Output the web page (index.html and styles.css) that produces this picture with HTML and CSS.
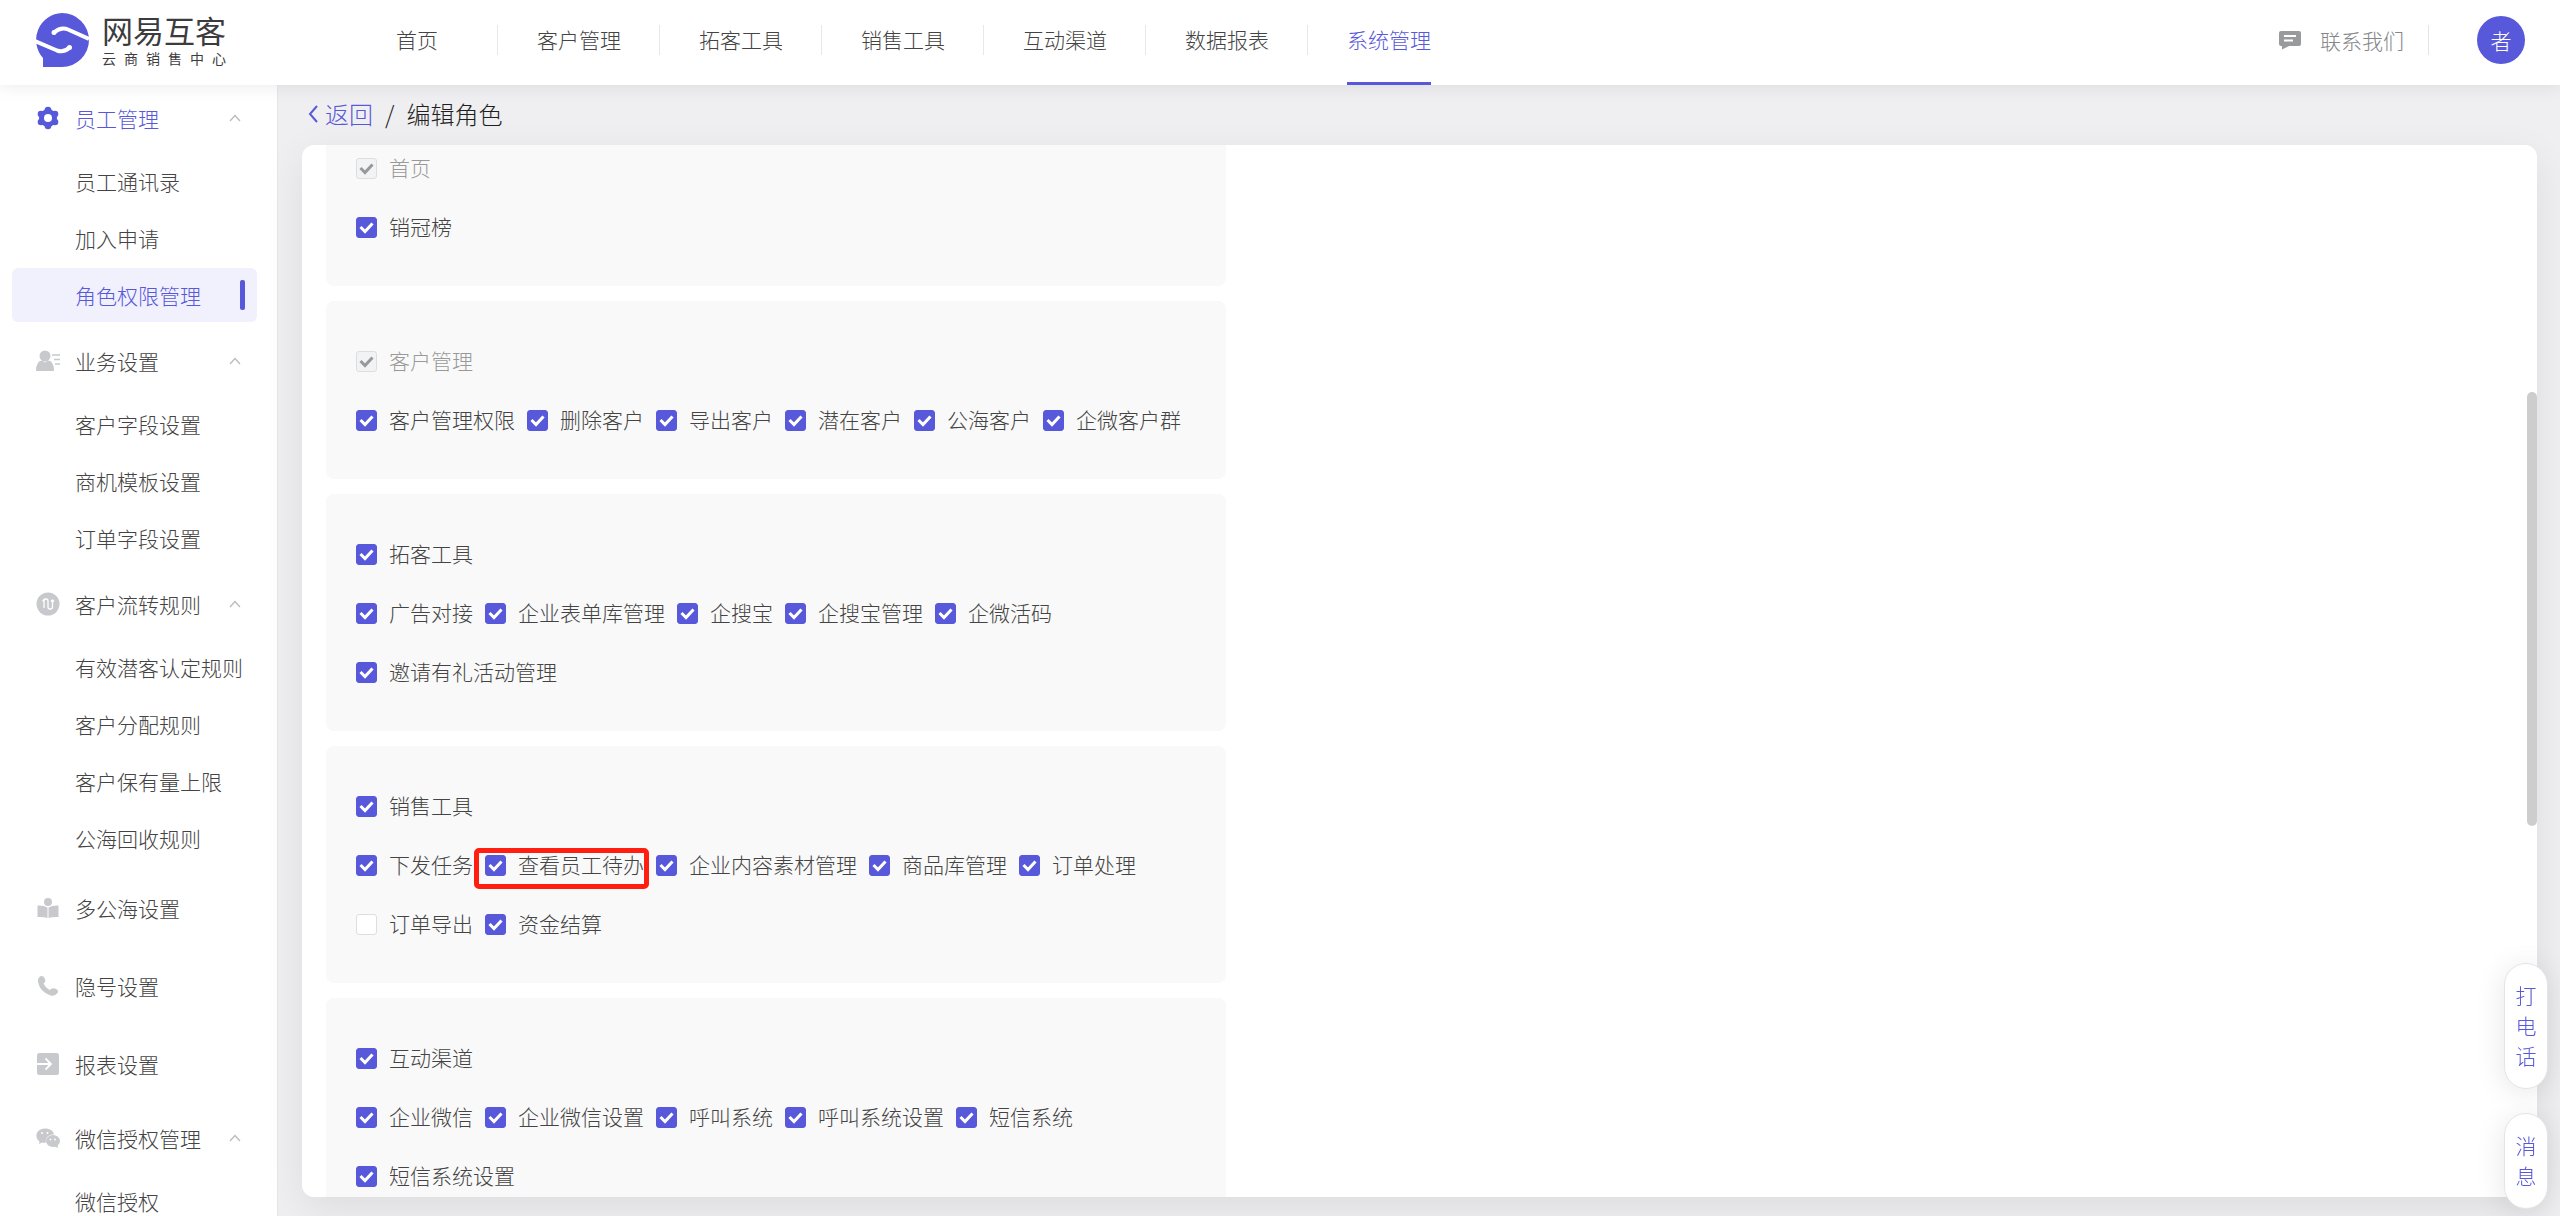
FILE: index.html
```html
<!DOCTYPE html>
<html lang="zh-CN">
<head>
<meta charset="utf-8">
<title>编辑角色</title>
<link rel="stylesheet" href="styles.css">
</head>
<body>
<div class="app">
  <header class="topbar">
    <a class="brand" href="#">
      <svg class="brand-mark" viewBox="0 0 54 54" aria-hidden="true">
        <path d="M27 0A27 27 0 0 1 54 27A27 27 0 0 1 27 54H8V45A27 27 0 0 1 27 0Z" fill="#5858da"/>
        <path d="M0 28L22 37.500Q29 40 34.500 34.500M54 26L33 16.500Q26 13.500 19 19.500" fill="none" stroke="#fff" stroke-width="4"/>
        <circle cx="19" cy="19.500" r="2.500" fill="#fff"/><circle cx="34.500" cy="34.500" r="2.500" fill="#fff"/>
      </svg>
      <span class="brand-text">
        <span class="brand-name">网易互客</span>
        <span class="brand-sub"><span>云</span><span>商</span><span>销</span><span>售</span><span>中</span><span>心</span></span>
      </span>
    </a>
    <nav class="nav">
      <a href="#">首页</a>
      <a href="#">客户管理</a>
      <a href="#">拓客工具</a>
      <a href="#">销售工具</a>
      <a href="#">互动渠道</a>
      <a href="#">数据报表</a>
      <a href="#" class="current"><span>系统管理</span></a>
    </nav>
    <a class="contact" href="#">
      <svg width="22" height="20" viewBox="0 0 22 20" aria-hidden="true"><path d="M2 1H20Q22 1 22 3V14Q22 16 20 16H10L3 19.500V16H2Q0 16 0 14V3Q0 1 2 1Z" fill="#999a9c"/><path d="M5 6H17M5 10.500H14" stroke="#fff" stroke-width="2"/></svg>
      联系我们
    </a>
    <button class="avatar" type="button">者</button>
  </header>

  <div class="body">
    <aside class="sidebar">
      <section class="group">
        <button class="head current" type="button">
          <svg class="icon" viewBox="0 0 24 26" aria-hidden="true"><g fill="#5858da"><circle cx="12" cy="13" r="9"/><circle cx="12" cy="5" r="3.300"/><circle cx="12" cy="21" r="3.300"/><circle cx="5" cy="9" r="3.300"/><circle cx="19" cy="9" r="3.300"/><circle cx="5" cy="17" r="3.300"/><circle cx="19" cy="17" r="3.300"/></g><circle cx="12" cy="13" r="4" fill="#fff"/></svg>
          <span>员工管理</span>
          <svg class="caret" viewBox="0 0 12 8" aria-hidden="true"><path d="M1 7L6 1.500L11 7"/></svg>
        </button>
        <a href="#">员工通讯录</a>
        <a href="#">加入申请</a>
        <a href="#" class="current">角色权限管理</a>
      </section>
      <section class="group">
        <button class="head" type="button">
          <svg class="icon" viewBox="0 0 24 24" aria-hidden="true"><g fill="#c8c9cc"><circle cx="9" cy="7" r="5.500"/><path d="M0 22Q0 12 6 11.500L9 13.500L12 11.500Q18 12 18 22Z"/></g><path d="M16 6H24M18 10.500H24M19 15H24" stroke="#c8c9cc" stroke-width="1.500"/></svg>
          <span>业务设置</span>
          <svg class="caret" viewBox="0 0 12 8" aria-hidden="true"><path d="M1 7L6 1.500L11 7"/></svg>
        </button>
        <a href="#">客户字段设置</a>
        <a href="#">商机模板设置</a>
        <a href="#">订单字段设置</a>
      </section>
      <section class="group">
        <button class="head" type="button">
          <svg class="icon" viewBox="0 0 24 24" aria-hidden="true"><circle cx="12" cy="12" r="11.500" fill="#c8c9cc"/><path d="M6.500 9L8 7.500V16M8 8.500Q8 7 10 7Q12 7 12 9V15Q12 17 14 17Q16.500 17 16.500 15V8M15 9.500L16.500 8L18 9.500" fill="none" stroke="#fff" stroke-width="1.300"/></svg>
          <span>客户流转规则</span>
          <svg class="caret" viewBox="0 0 12 8" aria-hidden="true"><path d="M1 7L6 1.500L11 7"/></svg>
        </button>
        <a href="#">有效潜客认定规则</a>
        <a href="#">客户分配规则</a>
        <a href="#">客户保有量上限</a>
        <a href="#">公海回收规则</a>
      </section>
      <button class="head single" type="button">
        <svg class="icon" viewBox="0 0 24 24" aria-hidden="true"><g fill="#c8c9cc"><circle cx="12" cy="6" r="4"/><path d="M1.500 9.500Q7 9 11.500 11.500V22Q7 20.500 1.500 21ZM22.500 9.500Q17 9 12.500 11.500V22Q17 20.500 22.500 21Z"/></g></svg>
        <span>多公海设置</span>
      </button>
      <button class="head single" type="button">
        <svg class="icon" viewBox="0 0 24 24" aria-hidden="true"><path fill="#c8c9cc" d="M3 3.500Q6.500 0.500 8.500 4Q10.500 7.500 7.500 9.500Q9.500 14 13.500 16Q16 13.500 19 14.500Q23.500 16.500 21.500 19Q19 22.500 14.500 21.500Q4 18 2 8Q1.500 5 3 3.500Z"/></svg>
        <span>隐号设置</span>
      </button>
      <button class="head single" type="button">
        <svg class="icon" viewBox="0 0 24 24" aria-hidden="true"><rect x="1" y="1" width="22" height="22" rx="2.500" fill="#c8c9cc"/><path d="M1 12H15M9.500 6.500L15 12L9.500 17.500" fill="none" stroke="#fff" stroke-width="1.800"/></svg>
        <span>报表设置</span>
      </button>
      <section class="group">
        <button class="head" type="button">
          <svg class="icon" viewBox="0 0 24 24" aria-hidden="true"><g fill="#c8c9cc"><path d="M9 2.500C14 2.500 17.500 5 18 8.500C13 8.500 9.500 11 9.800 16.500Q8 17 6 16.500L3 18L3.500 15.500C-1.500 12.500 -1 3 9 2.500Z"/><ellipse cx="17" cy="15" rx="7" ry="6"/><path d="M18 20L22 22L21.500 18Z"/></g><g fill="#fff"><circle cx="6" cy="7" r="1"/><circle cx="11.500" cy="7" r="1"/><circle cx="14.500" cy="13.500" r=".9"/><circle cx="19" cy="13.500" r=".9"/></g></svg>
          <span>微信授权管理</span>
          <svg class="caret" viewBox="0 0 12 8" aria-hidden="true"><path d="M1 7L6 1.500L11 7"/></svg>
        </button>
        <a href="#">微信授权</a>
      </section>
    </aside>

    <main class="main">
      <div class="crumbs">
        <a href="#"><svg width="10" height="18" viewBox="0 0 10 18" aria-hidden="true"><path d="M9 1L2 9L9 17" fill="none" stroke="#5858da" stroke-width="2"/></svg>返回</a>
        <span>/</span>
        <h1>编辑角色</h1>
      </div>
      <div class="panel">
        <div class="scroller">
          <div class="cards">
            <fieldset class="card">
              <div class="row"><label class="off"><input type="checkbox" checked disabled>首页</label></div>
              <div class="row"><label><input type="checkbox" checked>销冠榜</label></div>
            </fieldset>
            <fieldset class="card">
              <div class="row"><label class="off"><input type="checkbox" checked disabled>客户管理</label></div>
              <div class="row">
                <label><input type="checkbox" checked>客户管理权限</label>
                <label><input type="checkbox" checked>删除客户</label>
                <label><input type="checkbox" checked>导出客户</label>
                <label><input type="checkbox" checked>潜在客户</label>
                <label><input type="checkbox" checked>公海客户</label>
                <label><input type="checkbox" checked>企微客户群</label>
              </div>
            </fieldset>
            <fieldset class="card">
              <div class="row"><label><input type="checkbox" checked>拓客工具</label></div>
              <div class="row">
                <label><input type="checkbox" checked>广告对接</label>
                <label><input type="checkbox" checked>企业表单库管理</label>
                <label><input type="checkbox" checked>企搜宝</label>
                <label><input type="checkbox" checked>企搜宝管理</label>
                <label><input type="checkbox" checked>企微活码</label>
                <label><input type="checkbox" checked>邀请有礼活动管理</label>
              </div>
            </fieldset>
            <fieldset class="card">
              <div class="row"><label><input type="checkbox" checked>销售工具</label></div>
              <div class="row">
                <label><input type="checkbox" checked>下发任务</label>
                <label class="marked"><input type="checkbox" checked>查看员工待办</label>
                <label><input type="checkbox" checked>企业内容素材管理</label>
                <label><input type="checkbox" checked>商品库管理</label>
                <label><input type="checkbox" checked>订单处理</label>
                <label><input type="checkbox">订单导出</label>
                <label><input type="checkbox" checked>资金结算</label>
              </div>
            </fieldset>
            <fieldset class="card">
              <div class="row"><label><input type="checkbox" checked>互动渠道</label></div>
              <div class="row">
                <label><input type="checkbox" checked>企业微信</label>
                <label><input type="checkbox" checked>企业微信设置</label>
                <label><input type="checkbox" checked>呼叫系统</label>
                <label><input type="checkbox" checked>呼叫系统设置</label>
                <label><input type="checkbox" checked>短信系统</label>
                <label><input type="checkbox" checked>短信系统设置</label>
              </div>
            </fieldset>
          </div>
        </div>
        <div class="scrollbar"></div>
      </div>
    </main>
  </div>

  <div class="floaters">
    <button type="button">打电话</button>
    <button type="button">消息</button>
  </div>
</div>
</body>
</html>
```
FILE: styles.css
```css
* { box-sizing: border-box; }

body {
  margin: 0;
  font: 300 21px/30px "Noto Sans CJK SC", sans-serif;
  color: #444;
  background: #efeff1;
}

a { color: inherit; text-decoration: none; }

button {
  margin: 0;
  padding: 0;
  border: 0;
  background: none;
  font: inherit;
  color: inherit;
}

.app {
  display: flex;
  flex-direction: column;
  height: 100vh;
  overflow: hidden;
}

/* Top bar */
.topbar {
  position: relative;
  z-index: 2;
  flex: none;
  display: flex;
  height: 85px;
  padding: 0 35px;
  background: #fff;
  box-shadow: 0 2px 16px rgba(0, 0, 0, .08);
}

.brand {
  display: flex;
  gap: 13px;
  width: 300px;
  padding-top: 13px;
}

.brand-mark { width: 54px; height: 54px; }
.brand-text { width: 124px; color: #3c3c3e; }

.brand-name {
  display: block;
  font-size: 31px;
  line-height: 34px;
  font-weight: 400;
}

.brand-sub {
  display: flex;
  justify-content: space-between;
  font-size: 14px;
  line-height: 22px;
  font-weight: 400;
}

.nav { display: flex; flex: 1; }

.nav a {
  position: relative;
  width: 162px;
  padding: 24px 0 0 2px;
  text-align: center;
}

.nav a + a::before {
  content: "";
  position: absolute;
  left: 0;
  top: 25px;
  width: 1px;
  height: 30px;
  background: #e8e8ea;
}

.nav .current { display: flex; justify-content: center; color: #5858da; }
.nav .current span { border-bottom: 3px solid #5858da; }

.contact {
  display: flex;
  align-items: center;
  gap: 19px;
  height: 30px;
  margin: 25px 48px 0 0;
  padding-right: 24px;
  border-right: 1px solid #e4e4e6;
  line-height: 28px;
  color: #85868a;
}

.avatar {
  width: 48px;
  height: 48px;
  margin-top: 16px;
  border-radius: 50%;
  background: #5858da;
  color: #fff;
}

/* Side menu */
.body { display: flex; flex: 1; min-height: 0; }

.sidebar {
  flex: none;
  width: 278px;
  overflow: hidden;
  border-right: 1px solid #e6e6e9;
  background: #fff;
}

.head {
  display: flex;
  align-items: center;
  width: 100%;
  height: 72px;
  padding: 0 36px;
  text-align: left;
}

.group:first-child .head { height: 69px; padding-bottom: 4px; }
.head.single { height: 78px; padding-top: 2px; }
.head.current { color: #5858da; }
.head span { flex: 1; }
.icon { width: 24px; height: 26px; margin-right: 15px; }
.caret { width: 12px; height: 8px; fill: none; stroke: #bbb; stroke-width: 1.3; }

.group a {
  display: flex;
  align-items: center;
  height: 54px;
  margin: 0 20px 3px 12px;
  padding: 0 12px 0 63px;
  border-radius: 6px;
  white-space: nowrap;
}

.group a.current {
  justify-content: space-between;
  background: #f1f1fe;
  color: #5858da;
}

.group a.current::after {
  content: "";
  width: 5px;
  height: 30px;
  border-radius: 2px;
  background: #5858da;
}

/* Content */
.main {
  display: flex;
  flex: 1;
  flex-direction: column;
  min-width: 0;
  padding: 0 23px 19px 24px;
}

.crumbs {
  display: flex;
  align-items: flex-start;
  gap: 12px;
  height: 60px;
  padding: 11px 0 0 6px;
  font-size: 24px;
  line-height: 36px;
  color: #1f1f21;
}

.crumbs a { display: flex; align-items: center; gap: 7px; color: #5858da; }
.crumbs h1 { margin: 0; font: inherit; }

.panel {
  position: relative;
  flex: 1;
  min-height: 0;
  border-radius: 12px;
  background: #fff;
  box-shadow: 0 12px 40px rgba(0, 0, 0, .08);
}

.scroller { height: 100%; padding: 0 24px; overflow: hidden; border-radius: 12px; }

.cards {
  display: flex;
  flex-direction: column;
  gap: 15px;
  max-width: 900px;
  margin-top: -37px;
}

.card {
  min-width: 0;
  margin: 0;
  padding: 29px 30px 31px;
  border: 0;
  border-radius: 8px;
  background: #f9f9f9;
}

.row { display: flex; flex-wrap: wrap; column-gap: 12px; }

.row label {
  position: relative;
  display: flex;
  align-items: center;
  gap: 12px;
  height: 59px;
}

.row .off { color: #999; }

input[type="checkbox"] {
  appearance: none;
  width: 21px;
  height: 21px;
  margin: 4px 0 0;
  border: 1px solid #dcdee2;
  border-radius: 3px;
  background: #fff center / 15px 15px no-repeat;
}

input:checked {
  border-color: #5858da;
  background-color: #5858da;
  background-image: url("data:image/svg+xml,%3Csvg xmlns='http://www.w3.org/2000/svg' viewBox='0 0 15 15'%3E%3Cpath d='M1.500 7L6 11.500L13.500 3.500' fill='none' stroke='%23fff' stroke-width='3'/%3E%3C/svg%3E");
}

input:checked:disabled {
  border-color: #dcdee2;
  background-color: #f2f3f5;
  background-image: url("data:image/svg+xml,%3Csvg xmlns='http://www.w3.org/2000/svg' viewBox='0 0 15 15'%3E%3Cpath d='M1.500 7L6 11.500L13.500 3.500' fill='none' stroke='%23999' stroke-width='3'/%3E%3C/svg%3E");
}

.marked::after {
  content: "";
  position: absolute;
  inset: 14px -5px 4px -11px;
  border: 5px solid #ff1e10;
  border-radius: 5px;
}

.scrollbar {
  position: absolute;
  top: 247px;
  right: 0;
  width: 10px;
  height: 434px;
  border-radius: 5px;
  background: #cdcdcd;
}

/* Floating shortcuts */
.floaters {
  position: fixed;
  right: 12px;
  bottom: 7px;
  z-index: 3;
  display: flex;
  flex-direction: column;
  gap: 24px;
}

.floaters button {
  width: 44px;
  padding: 16px 10px 18px;
  border: 1px solid #e4e4e8;
  border-radius: 22px;
  background: #fff;
  box-shadow: 0 4px 30px rgba(0, 0, 0, .1);
  color: #5858da;
  word-break: break-all;
}
```
